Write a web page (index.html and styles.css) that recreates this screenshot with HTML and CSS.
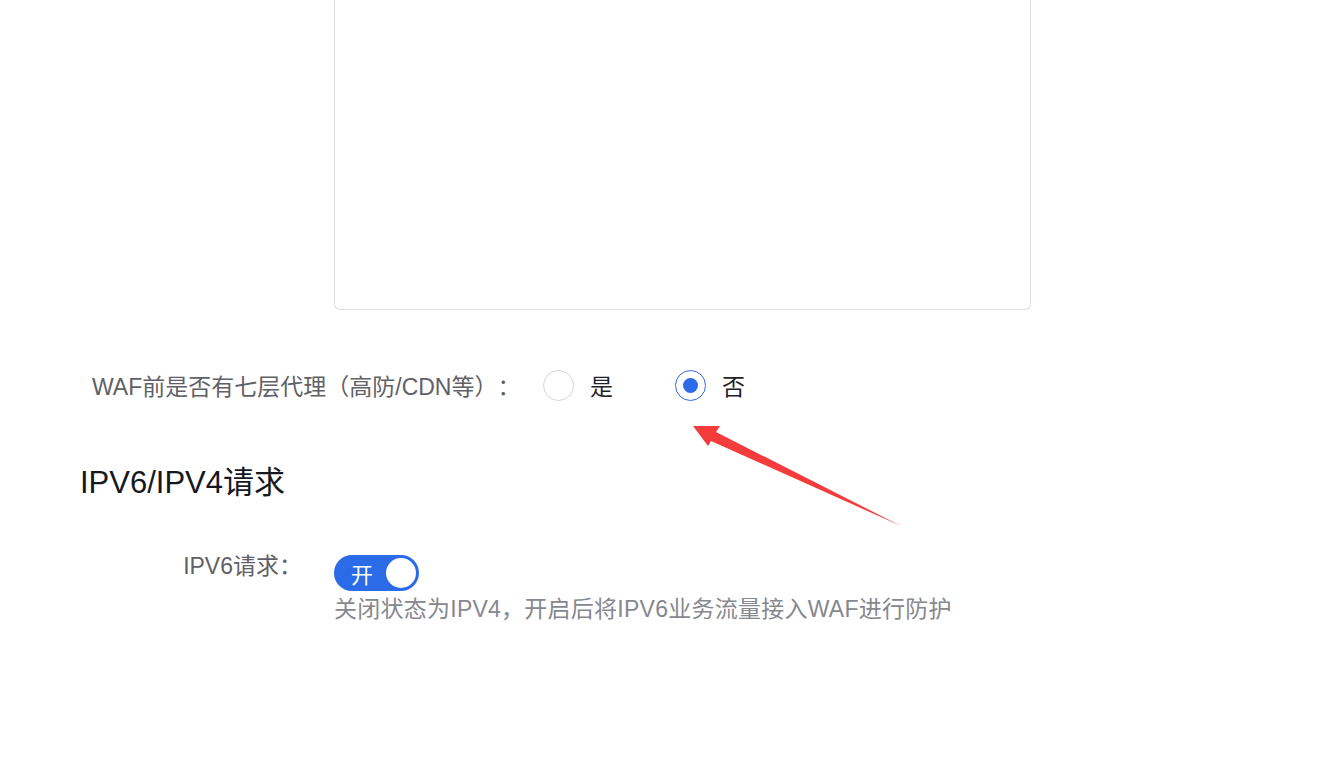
FILE: index.html
```html
<!DOCTYPE html>
<html lang="zh-CN">
<head>
<meta charset="utf-8">
<title>WAF</title>
<link rel="stylesheet" href="styles.css">
</head>
<body>
<div class="page">
  <div class="field-row">
    <div class="textarea-box"></div>
  </div>

  <div class="proxy-row">
    <span class="proxy-label">WAF前是否有七层代理（高防/CDN等）：</span>
    <label class="radio">
      <span class="radio-circle"></span>
      <span class="radio-text">是</span>
    </label>
    <label class="radio checked">
      <span class="radio-circle"><span class="radio-dot"></span></span>
      <span class="radio-text">否</span>
    </label>
  </div>

  <h2 class="section-title">IPV6/IPV4请求</h2>

  <div class="ipv6-row">
    <div class="ipv6-label">IPV6请求：</div>
    <div class="ipv6-control">
      <div class="switch">
        <span class="switch-text">开</span>
        <span class="switch-knob"></span>
      </div>
      <div class="hint">关闭状态为IPV4，开启后将IPV6业务流量接入WAF进行防护</div>
    </div>
  </div>
</div>

<svg class="arrow" width="1336" height="757" viewBox="0 0 1336 757">
  <polygon points="693,426 720,426 716,432 901,526 711,441 708,446" fill="#f53c3c"/>
</svg>
</body>
</html>
```

FILE: styles.css
```css
html, body {
  margin: 0;
  padding: 0;
  background: #ffffff;
}

body {
  font-family: "Liberation Sans", "Noto Sans CJK SC", sans-serif;
  text-spacing-trim: space-all;
  width: 1336px;
  height: 757px;
  overflow: hidden;
  position: relative;
}

.page {
  display: flex;
  flex-direction: column;
}

.field-row {
  padding-left: 334px;
}

.textarea-box {
  width: 695px;
  height: 309px;
  border: 1px solid #dcdfe6;
  border-top: none;
  border-radius: 0 0 6px 6px;
}

.proxy-row {
  display: flex;
  align-items: center;
  margin-top: 60px;
  padding-left: 92px;
  height: 30px;
}

.proxy-label {
  font-size: 23px;
  color: #5f6166;
  white-space: nowrap;
  width: 451px;
}

.radio {
  display: flex;
  align-items: center;
  margin-right: 62px;
}

.radio-circle {
  box-sizing: border-box;
  width: 31px;
  height: 31px;
  border-radius: 50%;
  border: 1px solid #d4d6da;
  display: flex;
  align-items: center;
  justify-content: center;
}

.radio.checked .radio-circle {
  border-color: #2b6be8;
}

.radio-dot {
  width: 15px;
  height: 15px;
  border-radius: 50%;
  background: #2b6be8;
}

.radio-text {
  font-size: 23px;
  color: #1f2329;
  margin-left: 16px;
}

.section-title {
  margin: 63px 0 0 80px;
  font-size: 31px;
  font-weight: normal;
  line-height: 40px;
  color: #15181d;
}

.ipv6-row {
  display: flex;
  margin-top: 52px;
}

.ipv6-label {
  width: 302px;
  padding-right: 32px;
  box-sizing: content-box;
  text-align: right;
  font-size: 23px;
  line-height: 22px;
  color: #5f6166;
  white-space: nowrap;
}

.ipv6-control {
  display: flex;
  flex-direction: column;
}

.switch {
  width: 85px;
  height: 36px;
  border-radius: 18px;
  background: #2b6be8;
  display: flex;
  align-items: center;
  justify-content: space-between;
  padding: 0 3px 0 17px;
  box-sizing: border-box;
}

.switch-text {
  color: #ffffff;
  font-size: 22px;
}

.switch-knob {
  width: 30px;
  height: 30px;
  border-radius: 50%;
  background: #ffffff;
}

.hint {
  margin-top: 3px;
  font-size: 23px;
  line-height: 30px;
  letter-spacing: 0.25px;
  color: #85888e;
  white-space: nowrap;
}

.arrow {
  position: absolute;
  left: 0;
  top: 0;
  pointer-events: none;
}
```
